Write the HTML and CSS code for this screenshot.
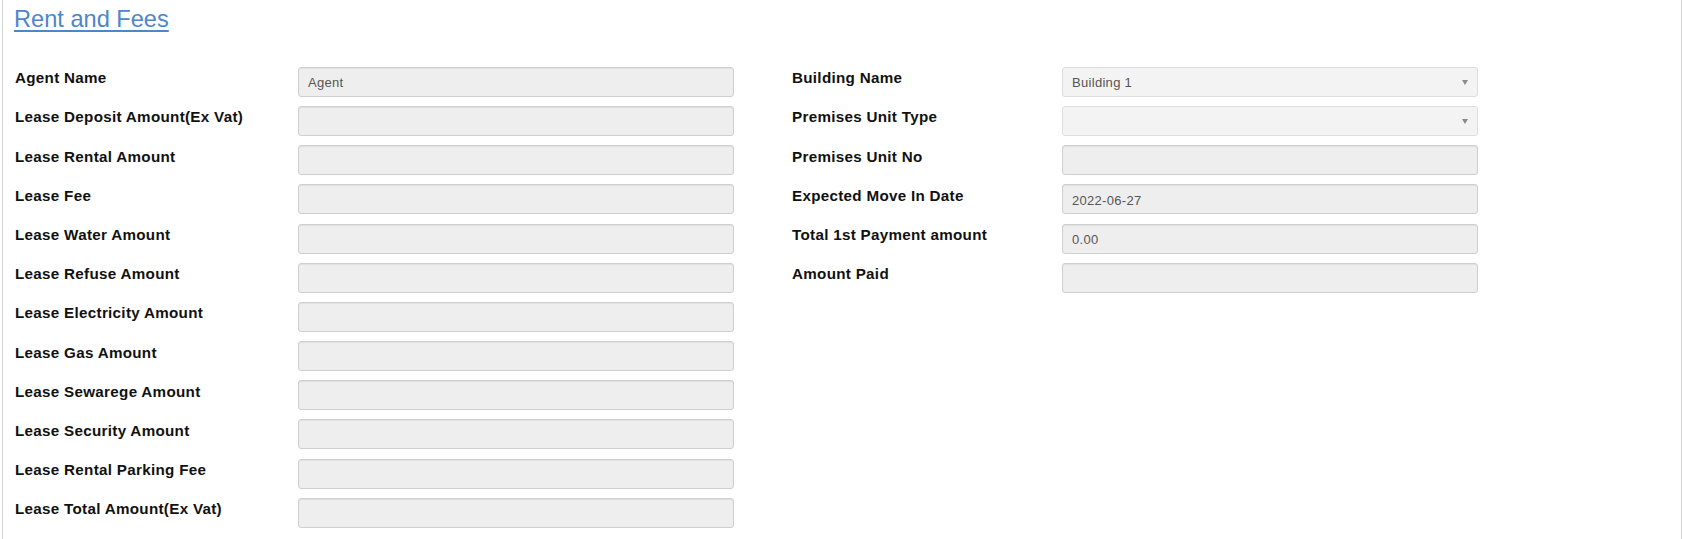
FILE: index.html
```html
<!DOCTYPE html>
<html>
<head>
<meta charset="utf-8">
<link rel="stylesheet" href="styles.css">
</head>
<body>
<div class="panel">
  <h3 class="title"><a href="#">Rent and Fees</a></h3>
  <div class="form">
    <div class="col col-left">
      <div class="row"><label>Agent Name</label><input class="ctrl" value="Agent" disabled></div>
      <div class="row"><label>Lease Deposit Amount(Ex Vat)</label><input class="ctrl" disabled></div>
      <div class="row"><label>Lease Rental Amount</label><input class="ctrl" disabled></div>
      <div class="row"><label>Lease Fee</label><input class="ctrl" disabled></div>
      <div class="row"><label>Lease Water Amount</label><input class="ctrl" disabled></div>
      <div class="row"><label>Lease Refuse Amount</label><input class="ctrl" disabled></div>
      <div class="row"><label>Lease Electricity Amount</label><input class="ctrl" disabled></div>
      <div class="row"><label>Lease Gas Amount</label><input class="ctrl" disabled></div>
      <div class="row"><label>Lease Sewarege Amount</label><input class="ctrl" disabled></div>
      <div class="row"><label>Lease Security Amount</label><input class="ctrl" disabled></div>
      <div class="row"><label>Lease Rental Parking Fee</label><input class="ctrl" disabled></div>
      <div class="row"><label>Lease Total Amount(Ex Vat)</label><input class="ctrl" disabled></div>
    </div>
    <div class="col col-right">
      <div class="row"><label>Building Name</label><div class="ctrl select"><span class="sel-text">Building 1</span><span class="arrow"></span></div></div>
      <div class="row"><label>Premises Unit Type</label><div class="ctrl select"><span class="sel-text"></span><span class="arrow"></span></div></div>
      <div class="row"><label>Premises Unit No</label><input class="ctrl" disabled></div>
      <div class="row"><label>Expected Move In Date</label><input class="ctrl" value="2022-06-27" disabled></div>
      <div class="row"><label>Total 1st Payment amount</label><input class="ctrl" value="0.00" disabled></div>
      <div class="row"><label>Amount Paid</label><input class="ctrl" disabled></div>
    </div>
  </div>
</div>
</body>
</html>
```

FILE: styles.css
```css
html, body {
  margin: 0;
  padding: 0;
  background: #ffffff;
  overflow: hidden;
}
body {
  font-family: "Liberation Sans", Arial, sans-serif;
  color: #111;
}
.panel {
  margin-left: 2px;
  height: 539px;
  box-sizing: border-box;
  border-left: 1px solid #d4d4d4;
  border-right: 1px solid #d4d4d4;
  padding: 4px 0 0 11px;
}
.title {
  margin: 0;
  font-size: 23.6px;
  font-weight: normal;
  line-height: 30px;
}
.title a {
  color: #4e86c9;
  text-decoration: underline;
  text-underline-offset: 3px;
  text-decoration-thickness: 1.5px;
}
.form {
  display: flex;
  margin-top: 32.8px;
  padding-left: 1px;
}
.col {
  display: flex;
  flex-direction: column;
  gap: 9.2px;
}
.col-left {
  width: 719px;
}
.col-right {
  margin-left: 58px;
  width: 686px;
}
.row {
  display: flex;
  align-items: flex-start;
  height: 30px;
}
.row label {
  font-size: 15.2px;
  letter-spacing: 0.3px;
  font-weight: bold;
  line-height: 20px;
  color: #111;
  padding-top: 1.5px;
}
.col-left label {
  width: 283px;
  flex: none;
}
.col-right label {
  width: 270px;
  flex: none;
}
.ctrl {
  box-sizing: border-box;
  height: 30px;
  margin: 0;
  border: 1px solid #cfcfcf;
  border-radius: 3px;
  background: #eeeeee;
  box-shadow: inset 0 1px 1px rgba(0, 0, 0, 0.06);
  font-family: "Liberation Sans", Arial, sans-serif;
  font-size: 13px;
  letter-spacing: 0.3px;
  color: #555;
  padding: 2px 9px 0 9px;
  opacity: 1;
  -webkit-text-fill-color: #555;
}
.col-left .ctrl {
  width: 436px;
}
.col-right .ctrl {
  width: 416px;
}
.select {
  display: flex;
  align-items: center;
  justify-content: space-between;
  background: #f3f3f3;
  border-color: #dedede;
  box-shadow: none;
  padding: 1px 9px 0 9px;
}
.sel-text {
  line-height: 15px;
}
.arrow {
  width: 0;
  height: 0;
  border-left: 3px solid transparent;
  border-right: 3px solid transparent;
  border-top: 5px solid #8a8a8a;
  margin-right: 0;
  margin-top: 1px;
}
```
